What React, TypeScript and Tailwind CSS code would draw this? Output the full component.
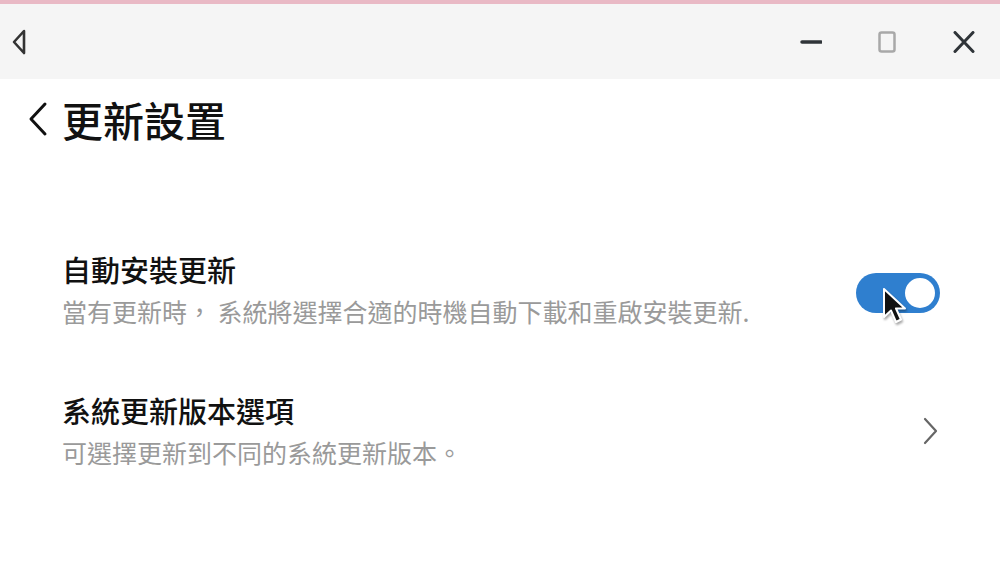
import React, { useState } from 'react';

const font = { fontFamily: '"Noto Sans CJK TC", "Noto Sans", sans-serif' };

function Cursor() {
  return (
    <svg width="28" height="40" viewBox="0 0 28 40" className="absolute left-[26px] top-[14px] pointer-events-none drop-shadow-[1px_2px_1px_rgba(0,0,0,0.35)]">
      <path d="M2 2 L2 30 L9 23.5 L14 35 L19 32.5 L14 21.5 L23 21.5 Z" fill="#111" stroke="#fff" strokeWidth="2" strokeLinejoin="round" />
    </svg>
  );
}

export default function App() {
  const [autoUpdate, setAutoUpdate] = useState(true);

  return (
    <div className="w-[1000px] h-[586px] bg-white flex flex-col overflow-hidden" style={font}>
      <div className="h-[4px] bg-[#e9b9c5]" />
      <div className="h-[75px] bg-[#f5f5f5] flex items-center justify-between pl-[12px] pr-[24px]">
        <button className="w-[16px] h-[26px] flex items-center">
          <svg width="14" height="26" viewBox="0 0 14 26">
            <path d="M12 2 L2 13 L12 24 Z" fill="none" stroke="#333" strokeWidth="2.6" strokeLinejoin="round" />
          </svg>
        </button>
        <div className="flex items-center gap-[54px]">
          <svg width="22" height="22" viewBox="0 0 22 22">
            <path d="M2 11 H21" stroke="#2f3438" strokeWidth="3.5" strokeLinecap="round" />
          </svg>
          <svg width="22" height="22" viewBox="0 0 22 22">
            <rect x="3.5" y="1.5" width="15" height="19" rx="2" fill="none" stroke="#a8a8a8" strokeWidth="2.5" />
          </svg>
          <svg width="24" height="22" viewBox="0 0 24 22">
            <path d="M3 1.5 L21 20.5 M21 1.5 L3 20.5" stroke="#2f3438" strokeWidth="3" strokeLinecap="round" />
          </svg>
        </div>
      </div>

      <div className="flex items-center h-[78px] pl-[26px] pt-[2px]">
        <svg width="24" height="36" viewBox="0 0 24 36" className="mr-[12px]">
          <path d="M19 3 L5 18 L19 33" fill="none" stroke="#111" strokeWidth="3" strokeLinecap="round" strokeLinejoin="round" />
        </svg>
        <span className="text-[41px] leading-none text-[#111] font-medium">更新設置</span>
      </div>

      <div className="pl-[62px] pr-[60px] mt-[98px]">
        <div className="flex items-center justify-between">
          <div className="flex flex-col gap-[15px]">
            <span className="text-[29px] leading-none text-[#111] font-medium">自動安裝更新</span>
            <span className="text-[25px] leading-none text-[#9a9a9a]">當有更新時， 系統將選擇合適的時機自動下載和重啟安裝更新.</span>
          </div>
          <div className="relative mt-[6px]">
            <button
              onClick={() => setAutoUpdate(!autoUpdate)}
              className={`w-[84px] h-[40px] rounded-full flex items-center px-[2px] ${autoUpdate ? 'bg-[#2f7fcf] justify-end' : 'bg-[#cfcfcf] justify-start'}`}
            >
              <span className="w-[36px] h-[36px] rounded-full bg-white border-[3px] border-[#2f7fcf]" />
            </button>
            <Cursor />
          </div>
        </div>

        <div className="flex items-center justify-between mt-[72px]">
          <div className="flex flex-col gap-[15px]">
            <span className="text-[29px] leading-none text-[#111] font-medium">系統更新版本選項</span>
            <span className="text-[25px] leading-none text-[#9a9a9a]">可選擇更新到不同的系統更新版本。</span>
          </div>
          <svg width="20" height="30" viewBox="0 0 20 30">
            <path d="M5 3 L16 15 L5 27" fill="none" stroke="#666" strokeWidth="2.2" strokeLinecap="round" strokeLinejoin="round" />
          </svg>
        </div>
      </div>
    </div>
  );
}
